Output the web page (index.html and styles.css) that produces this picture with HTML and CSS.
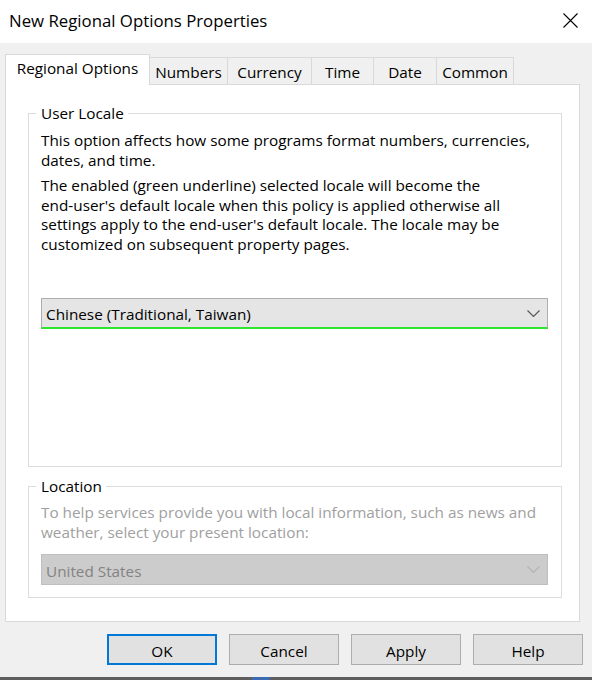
FILE: index.html
```html
<!DOCTYPE html>
<html lang="en">
<head>
<meta charset="utf-8">
<title>New Regional Options Properties</title>
<link rel="stylesheet" href="styles.css">
</head>
<body>
<div class="window">
  <header class="titlebar">
    <span class="title">New Regional Options Properties</span>
    <svg class="close" width="15" height="15" viewBox="0 0 15 15" aria-label="Close">
      <path d="M0.5 0.5 L14.5 14.5 M14.5 0.5 L0.5 14.5" stroke="#000" stroke-width="1.1" fill="none"/>
    </svg>
  </header>
  <div class="client">
    <div class="tabs">
      <div class="tab active">Regional Options</div>
      <div class="tab t-numbers">Numbers</div>
      <div class="tab t-currency">Currency</div>
      <div class="tab t-time">Time</div>
      <div class="tab t-date">Date</div>
      <div class="tab t-common">Common</div>
    </div>
    <div class="panel">
      <fieldset class="group locale">
        <legend>User Locale</legend>
        <p class="first">This option affects how some programs format numbers, currencies, dates, and time.</p>
        <p>The enabled (green underline) selected locale will become the <span class="nw">end-user's</span> default locale when this policy is applied otherwise all settings apply to the <span class="nw">end-user's</span> default locale. The locale may be customized on subsequent property pages.</p>
        <div class="combo enabled">
          <span>Chinese (Traditional, Taiwan)</span>
          <svg class="chev" width="13" height="7" viewBox="0 0 13 7"><path d="M0.5 0.5 L6.5 6.5 L12.5 0.5" stroke="#5a5a5a" stroke-width="1.2" fill="none"/></svg>
        </div>
      </fieldset>
      <fieldset class="group location">
        <legend>Location</legend>
        <p class="first muted">To help services provide you with local information, such as news and weather, select your present location:</p>
        <div class="combo disabled">
          <span>United States</span>
          <svg class="chev" width="13" height="7" viewBox="0 0 13 7"><path d="M0.5 0.5 L6.5 6.5 L12.5 0.5" stroke="#b4b4b4" stroke-width="1.2" fill="none"/></svg>
        </div>
      </fieldset>
    </div>
    <div class="buttons">
      <button class="btn default">OK</button>
      <button class="btn">Cancel</button>
      <button class="btn">Apply</button>
      <button class="btn">Help</button>
    </div>
  </div>
  <div class="taskbar"><span class="task-active"></span></div>
</div>
</body>
</html>
```
FILE: styles.css
```css
* { box-sizing: border-box; }
html, body { margin: 0; padding: 0; }
body {
  width: 592px;
  height: 680px;
  overflow: hidden;
  background: #f0f0f0;
  font-family: "Open Sans", "Noto Sans", "Liberation Sans", sans-serif;
  font-size: 15.3px;
  color: #000;
}
.window {
  width: 592px;
  height: 680px;
  display: flex;
  flex-direction: column;
}
.titlebar {
  height: 43px;
  background: #fff;
  display: flex;
  align-items: center;
  justify-content: space-between;
  padding: 0 14px 0 9px;
}
.title {
  font-size: 16.8px;
  line-height: 20px;
  margin-top: -2px;
}
.close { display: block; margin-top: -3px; }
.client {
  flex: 1;
  padding: 11px 0 0 5px;
  display: flex;
  flex-direction: column;
}
.tabs {
  display: flex;
  align-items: flex-end;
  height: 30px;
}
.tab {
  height: 27px;
  padding-top: 4px;
  line-height: 20px;
  text-align: center;
  border-top: 1px solid #d9d9d9;
  border-right: 1px solid #d9d9d9;
  background: #f0f0f0;
  white-space: nowrap;
}
.tab.active {
  width: 145px;
  height: 31px;
  margin-bottom: -1px;
  border: 1px solid #d9d9d9;
  border-bottom: none;
  background: #fff;
  position: relative;
  z-index: 1;
  padding-top: 3px;
}
.t-numbers { width: 78px; }
.t-currency { width: 84px; }
.t-time { width: 62px; }
.t-date { width: 63px; }
.t-common { width: 77px; }

.panel {
  width: 575px;
  height: 538px;
  background: #fff;
  border: 1px solid #d9d9d9;
  padding-top: 18px;
}
.group {
  margin: 0 17px 0 22px;
  border: 1px solid #dcdcdc;
  padding: 0 13px 0 12px;
  min-width: 0;
}
.group legend {
  padding: 0 4px 0 5px;
  margin-left: -5px;
  line-height: 20px;
}
.group p {
  margin: 6px 0 0;
  line-height: 19.5px;
}
.group p.first { margin-top: 8px; }
.nw { white-space: nowrap; }
.locale { padding-bottom: 137px; }
.location { margin-top: 9px; padding-bottom: 12px; }
.location p.first { margin-top: 7px; }
.muted { color: #a0a0a0; }

.combo {
  height: 31px;
  display: flex;
  align-items: center;
  justify-content: space-between;
  padding: 0 7px 0 4px;
  border: 1px solid #adadad;
}
.combo span { line-height: 20px; margin-top: 2px; }
.combo.enabled {
  margin-top: 44px;
  background: #e5e5e5;
  border-bottom: 2px solid #2ee62e;
}
.combo.disabled {
  margin-top: 12px;
  background: #cccccc;
  border-color: #bfbfbf;
  color: #838383;
}
.chev { display: block; }

.buttons {
  display: flex;
  justify-content: flex-end;
  gap: 12px;
  padding-right: 9px;
  margin-top: 12px;
}
.btn {
  width: 110px;
  height: 31px;
  font: inherit;
  line-height: 20px;
  padding: 2px 0 0;
  color: #000;
  background: #e1e1e1;
  border: 1px solid #adadad;
  border-radius: 0;
}
.btn.default {
  border: 2px solid #0078d7;
  padding-top: 2px;
}
.taskbar {
  height: 3px;
  margin-top: auto;
  background: #5e5e5e;
  position: relative;
}
.task-active {
  position: absolute;
  left: 252px;
  top: 0;
  width: 18px;
  height: 3px;
  background: #3d6bb3;
}
```
